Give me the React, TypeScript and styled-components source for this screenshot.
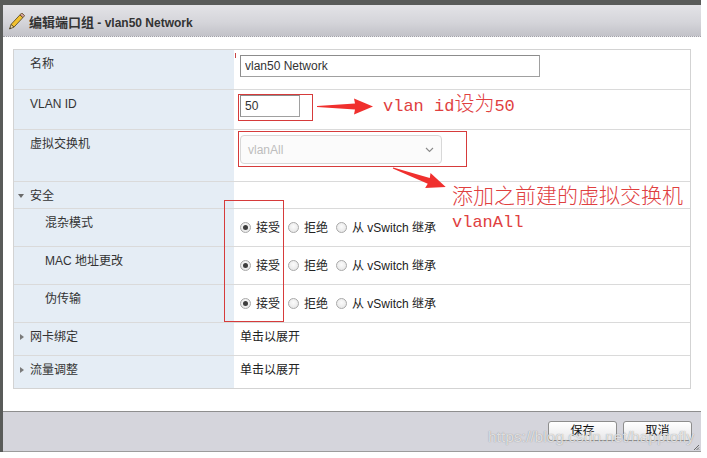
import React from 'react';
import styled, { createGlobalStyle } from 'styled-components';

const Global = createGlobalStyle`
  html, body { margin: 0; padding: 0; background: #ffffff; }
  body {
    font-family: "Liberation Sans", "Noto Sans CJK SC", sans-serif;
    font-size: 12px;
    color: #333;
  }
`;

const Screen = styled.div`
  position: relative;
  width: 701px;
  height: 452px;
  box-sizing: border-box;
  padding: 5px 0 0 3px;
  background: #595b59;
  display: flex;
`;

const Dialog = styled.div`
  flex: 1;
  min-width: 0;
  display: flex;
  flex-direction: column;
  background: #fff;
`;

const TitleBar = styled.div`
  height: 32px;
  box-sizing: border-box;
  display: flex;
  align-items: center;
  gap: 4px;
  padding: 2px 0 0 5px;
  background: linear-gradient(#e3e3e7 0%, #d5d5da 55%, #c2c2c8 100%);
  border-bottom: 1px dotted #a2a2a8;
`;

const Title = styled.div`
  font-size: 12px;
  font-weight: bold;
  color: #333;
  white-space: pre;
`;

const TitleCjk = styled.span`
  font-size: 13px;
`;

const Body = styled.div`
  flex: 1;
  padding: 12px 10px 0 10px;
`;

const Table = styled.div`
  border: 1px solid #d3d3d3;
  display: flex;
  flex-direction: column;
`;

const Row = styled.div<{ $h: number }>`
  display: grid;
  grid-template-columns: 220px 1fr;
  height: ${(p) => p.$h}px;
  box-sizing: border-box;
  & + & {
    border-top: 1px solid #dadada;
  }
`;

const LabelCell = styled.div<{ $indent?: number; $pt?: number }>`
  background: #e5edf5;
  padding: ${(p) => p.$pt ?? 6}px 0 0 ${(p) => p.$indent ?? 16}px;
  line-height: 16px;
  color: #333;
  white-space: nowrap;
`;

const ToggleLine = styled.div`
  display: flex;
  align-items: center;
  height: 16px;
  gap: 6px;
`;

const Caret = styled.span<{ $open?: boolean }>`
  display: block;
  width: 0;
  height: 0;
  ${(p) =>
    p.$open
      ? `border-left: 3px solid transparent; border-right: 3px solid transparent; border-top: 4px solid #6a6a6a;`
      : `margin-left: 2px; border-top: 3px solid transparent; border-bottom: 3px solid transparent; border-left: 4px solid #7a7a7a;`}
`;

const ValueCell = styled.div<{ $center?: boolean; $pt?: number }>`
  display: flex;
  align-items: ${(p) => (p.$center ? 'center' : 'flex-start')};
  padding: ${(p) => (p.$center ? 0 : p.$pt ?? 5)}px 0 0 6px;
  line-height: 16px;
  color: #222;
  white-space: nowrap;
`;

const TextInput = styled.input<{ $w: number }>`
  width: ${(p) => p.$w}px;
  height: 22px;
  box-sizing: border-box;
  border: 1px solid #a0a0a0;
  border-top-color: #8c8c8c;
  border-left-color: #8c8c8c;
  padding: 0 4px;
  margin: 0;
  font-family: "Liberation Sans", "Noto Sans CJK SC", sans-serif;
  font-size: 12px;
  color: #333;
  background: #fff;
  outline: none;
`;

const FakeSelect = styled.div`
  width: 202px;
  height: 29px;
  box-sizing: border-box;
  border: 1px solid #d8d8d8;
  border-radius: 4px;
  background: #fbfbfb;
  display: flex;
  align-items: center;
  justify-content: space-between;
  padding: 0 7px 0 7px;
  color: #bdbdbd;
  font-size: 12px;
`;

const RadioGroup = styled.div`
  display: flex;
  align-items: center;
`;

const RadioItem = styled.label`
  display: flex;
  align-items: center;
  gap: 5px;
  margin-right: 8px;
  color: #222;
`;

const RadioDot = styled.span<{ $checked?: boolean }>`
  width: 11px;
  height: 11px;
  box-sizing: border-box;
  border-radius: 50%;
  border: 1px solid #a9a9a9;
  background: radial-gradient(circle at 50% 40%, #fbfbfb 0%, #e2e2e2 100%);
  display: flex;
  align-items: center;
  justify-content: center;
  &::after {
    content: '';
    width: 5px;
    height: 5px;
    border-radius: 50%;
    background: ${(p) => (p.$checked ? '#3d3d3d' : 'transparent')};
  }
`;

const Footer = styled.div`
  height: 41px;
  box-sizing: border-box;
  border-top: 1px solid #8e8e8e;
  border-bottom: 1px solid #9c9c9c;
  background: #d5d5dc;
  display: flex;
  justify-content: flex-end;
  align-items: flex-start;
  gap: 6px;
  padding: 9px 9px 0 0;
`;

const Button = styled.button`
  width: 69px;
  height: 20px;
  box-sizing: border-box;
  border: 1px solid #8d8d8d;
  border-radius: 3px;
  background: linear-gradient(#ffffff, #e7e7e9);
  font-family: "Liberation Sans", "Noto Sans CJK SC", sans-serif;
  font-size: 12px;
  color: #111;
  padding: 0;
  line-height: 16px;
`;

/* ---------- overlays (annotations drawn over the screenshot) ---------- */

const RedBox = styled.div<{ $x: number; $y: number; $w: number; $h: number }>`
  position: absolute;
  left: ${(p) => p.$x}px;
  top: ${(p) => p.$y}px;
  width: ${(p) => p.$w}px;
  height: ${(p) => p.$h}px;
  box-sizing: border-box;
  border: 1px solid #d63b3b;
  pointer-events: none;
`;

const Overlay = styled.div<{ $x: number; $y: number }>`
  position: absolute;
  left: ${(p) => p.$x}px;
  top: ${(p) => p.$y}px;
  line-height: 0;
  pointer-events: none;
`;

const Note = styled.div<{ $x: number; $y: number }>`
  position: absolute;
  left: ${(p) => p.$x}px;
  top: ${(p) => p.$y}px;
  font-family: "Liberation Mono", "Noto Sans CJK SC", monospace;
  font-size: 17px;
  line-height: 20px;
  color: #e0403f;
  white-space: pre;
  pointer-events: none;
`;

const NoteCjk = styled.span`
  font-family: "Noto Sans CJK SC", sans-serif;
  font-size: 20px;
  font-weight: 300;
  line-height: 0;
`;

const CjkNote = styled.div<{ $x: number; $y: number }>`
  position: absolute;
  left: ${(p) => p.$x}px;
  top: ${(p) => p.$y}px;
  font-family: "Noto Sans CJK SC", sans-serif;
  font-size: 21px;
  font-weight: 300;
  line-height: 24px;
  color: #e0403f;
  white-space: pre;
  pointer-events: none;
`;

const Cursor = styled.div`
  position: absolute;
  left: 235px;
  top: 53px;
  width: 1px;
  height: 5px;
  background: #c84444;
`;

const Watermark = styled.div`
  position: absolute;
  left: 488px;
  top: 428px;
  font-family: "Liberation Sans", sans-serif;
  font-size: 15.5px;
  line-height: 18px;
  color: rgba(255, 255, 255, 0.72);
  text-shadow: 0 0 1px rgba(70, 70, 70, 0.6);
  white-space: nowrap;
  pointer-events: none;
`;

const Pencil = () => (
  <svg width="17" height="18" viewBox="0 0 17 18">
    <g transform="translate(1.5 16) rotate(-47)">
      <path d="M0 0 L4.5 -2 L4.5 2 Z" fill="#ecd7a6" stroke="#5a4a1e" strokeWidth="0.8" />
      <path d="M0 0 L1.7 -0.75 L1.7 0.75 Z" fill="#333" />
      <rect x="4.5" y="-2" width="13" height="4" fill="#f2c12e" stroke="#5a4a1e" strokeWidth="0.8" />
      <rect x="17.5" y="-2" width="2.6" height="4" fill="#d8a2a2" stroke="#5a4a1e" strokeWidth="0.8" />
    </g>
  </svg>
);

const Chevron = () => (
  <svg width="9" height="6" viewBox="0 0 9 6">
    <path d="M1 1 L4.5 4.5 L8 1" fill="none" stroke="#8a8a8a" strokeWidth="1.1" />
  </svg>
);

const ArrowShape = 'M0 -0.6 L38 -3 L37 -8 L56 0 L37 8 L38 3 L0 0.6 Z';

const Grip = () => (
  <svg width="8" height="8" viewBox="0 0 8 8">
    <path d="M7 2 L2 7 M7 4.5 L4.5 7 M7 6.5 L6.5 7" stroke="#6a6a6a" strokeWidth="1" />
  </svg>
);

type RadioRowProps = { label: string };

const Radios = () => (
  <RadioGroup>
    <RadioItem>
      <RadioDot $checked />
      接受
    </RadioItem>
    <RadioItem>
      <RadioDot />
      拒绝
    </RadioItem>
    <RadioItem>
      <RadioDot />
      从 vSwitch 继承
    </RadioItem>
  </RadioGroup>
);

const SecurityRow = ({ label }: RadioRowProps) => (
  <Row $h={38}>
    <LabelCell $indent={31}>{label}</LabelCell>
    <ValueCell $center>
      <Radios />
    </ValueCell>
  </Row>
);

export default function App() {
  return (
    <>
      <Global />
      <Screen>
        <Dialog>
          <TitleBar>
            <Pencil />
            <Title>
              <TitleCjk>编辑端口组</TitleCjk> - vlan50 Network
            </Title>
          </TitleBar>
          <Body>
            <Table>
              <Row $h={39}>
                <LabelCell>名称</LabelCell>
                <ValueCell>
                  <TextInput $w={300} defaultValue="vlan50 Network" readOnly />
                </ValueCell>
              </Row>
              <Row $h={40}>
                <LabelCell>VLAN ID</LabelCell>
                <ValueCell>
                  <TextInput $w={60} defaultValue="50" readOnly />
                </ValueCell>
              </Row>
              <Row $h={52}>
                <LabelCell>虚拟交换机</LabelCell>
                <ValueCell>
                  <FakeSelect>
                    <span>vlanAll</span>
                    <Chevron />
                  </FakeSelect>
                </ValueCell>
              </Row>
              <Row $h={27}>
                <LabelCell $indent={4} $pt={6}>
                  <ToggleLine>
                    <Caret $open />
                    安全
                  </ToggleLine>
                </LabelCell>
                <ValueCell />
              </Row>
              <SecurityRow label="混杂模式" />
              <SecurityRow label="MAC 地址更改" />
              <SecurityRow label="伪传输" />
              <Row $h={33}>
                <LabelCell $indent={4}>
                  <ToggleLine>
                    <Caret />
                    网卡绑定
                  </ToggleLine>
                </LabelCell>
                <ValueCell $pt={6}>单击以展开</ValueCell>
              </Row>
              <Row $h={33}>
                <LabelCell $indent={4}>
                  <ToggleLine>
                    <Caret />
                    流量调整
                  </ToggleLine>
                </LabelCell>
                <ValueCell $pt={6}>单击以展开</ValueCell>
              </Row>
            </Table>
          </Body>
          <Footer>
            <Button>保存</Button>
            <Button>取消</Button>
          </Footer>
        </Dialog>

        <Cursor />
        <RedBox $x={238} $y={94} $w={75} $h={27} />
        <RedBox $x={238} $y={131} $w={229} $h={36} />
        <RedBox $x={224} $y={200} $w={60} $h={122} />

        <Overlay $x={316} $y={96}>
          <svg width="60" height="21" viewBox="0 0 60 21">
            <g transform="translate(1 10.5)">
              <path d={ArrowShape} fill="#f0302e" />
            </g>
          </svg>
        </Overlay>
        <Overlay $x={388} $y={158}>
          <svg width="64" height="36" viewBox="0 0 64 36">
            <g transform="translate(5 10) rotate(19.7)">
              <path d={ArrowShape} fill="#f0302e" />
            </g>
          </svg>
        </Overlay>

        <Note $x={383} $y={97}>
          vlan id<NoteCjk>设为</NoteCjk>50
        </Note>
        <CjkNote $x={452} $y={182}>添加之前建的虚拟交换机</CjkNote>
        <Note $x={452} $y={213}>vlanAll</Note>

        <Watermark>https://blog.csdn.net/happtofly</Watermark>
        <Overlay $x={692} $y={443}>
          <Grip />
        </Overlay>
      </Screen>
    </>
  );
}
